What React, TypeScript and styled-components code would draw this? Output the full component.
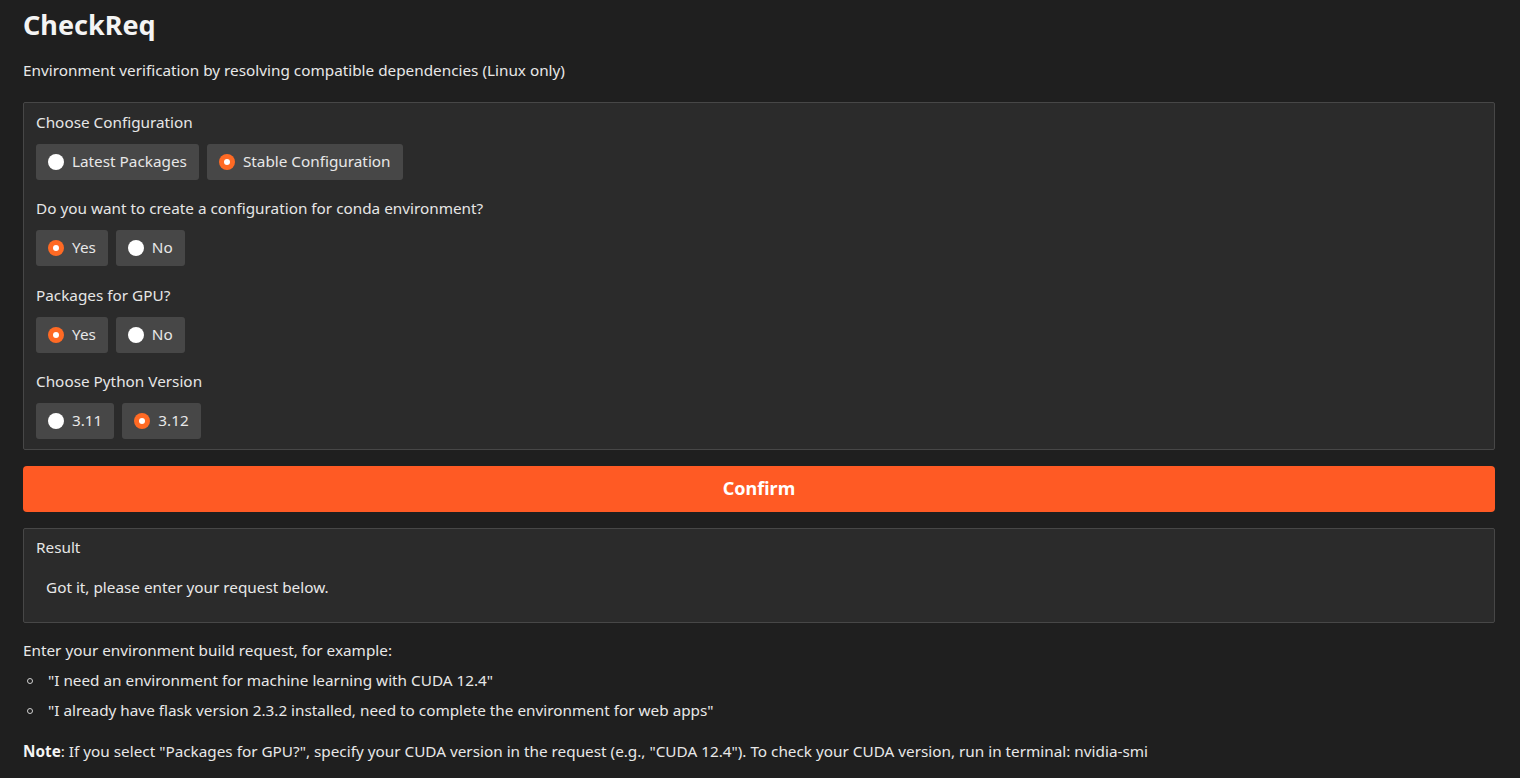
import React from "react";
import styled, { createGlobalStyle } from "styled-components";

const Global = createGlobalStyle`
  html, body { margin: 0; padding: 0; background: #1f1f1f; }
  body { font-family: "Noto Sans", "Open Sans", sans-serif; color: #e8e8e8; }
  * { box-sizing: border-box; }
`;

const Page = styled.div`
  padding: 0 25px 0 23px;
  display: flex;
  flex-direction: column;
`;

const Title = styled.h1`
  margin: 7px 0 0;
  font-size: 27px;
  line-height: 36px;
  font-weight: 700;
  color: #f4f4f4;
`;

const Description = styled.p`
  margin: 17px 0 0;
  font-size: 15.3px;
  line-height: 21px;
`;

const Panel = styled.div`
  margin-top: 21px;
  background: #2b2b2b;
  border: 1px solid #474747;
  border-radius: 2px;
  padding: 9px 12px 10px;
  display: flex;
  flex-direction: column;
  gap: 18.33px;
`;

const Group = styled.div`
  display: flex;
  flex-direction: column;
  gap: 12px;
`;

const Label = styled.div`
  font-size: 15.3px;
  line-height: 20px;
  padding-bottom: 1px;
  margin-bottom: -1px;
  color: #e6e6e6;
`;

const Options = styled.div`
  display: flex;
  gap: 8px;
`;

const Option = styled.div`
  height: 36px;
  display: flex;
  align-items: center;
  gap: 8px;
  padding: 0 12px 2px;
  background: #474747;
  border-radius: 3px;
  font-size: 15.3px;
  color: #e8e8e8;
`;

const Dot = styled.span<{ $on: boolean }>`
  width: 16px;
  height: 16px;
  margin-top: 2px;
  border-radius: 50%;
  background: ${(p) => (p.$on ? "#ff6a24" : "#ffffff")};
  display: flex;
  align-items: center;
  justify-content: center;
  &::after {
    content: "";
    width: 6px;
    height: 6px;
    border-radius: 50%;
    background: #ffffff;
    display: ${(p) => (p.$on ? "block" : "none")};
  }
`;

const ConfirmButton = styled.button`
  margin-top: 16px;
  height: 46px;
  width: 100%;
  border: none;
  border-radius: 4px;
  background: #ff5a24;
  color: #ffffff;
  font-family: inherit;
  font-size: 18px;
  font-weight: 700;
  padding-bottom: 2px;
`;

const ResultBox = styled.div`
  margin-top: 16px;
  height: 95px;
  background: #2b2b2b;
  border: 1px solid #474747;
  border-radius: 2px;
  padding: 8px 12px;
  display: flex;
  flex-direction: column;
`;

const ResultText = styled.div`
  margin-top: 20px;
  padding-left: 10px;
  font-size: 15.3px;
  line-height: 20px;
`;

const Intro = styled.p`
  margin: 17px 0 0;
  font-size: 15.3px;
  line-height: 20px;
`;

const List = styled.ul`
  margin: 10px 0 0;
  padding: 0;
  list-style: none;
  display: flex;
  flex-direction: column;
  gap: 10px;
`;

const Item = styled.li`
  display: flex;
  align-items: center;
  font-size: 15.3px;
  line-height: 20px;
  &::before {
    content: "";
    width: 4px;
    height: 4px;
    border: 1px solid #cfcfcf;
    border-radius: 50%;
    margin: 2px 15px 0 4px;
  }
`;

const Note = styled.p`
  margin: 21px 0 0;
  font-size: 15.3px;
  line-height: 20px;
  b { font-weight: 700; color: #f4f4f4; }
`;

type Q = { label: string; options: string[]; selected: number };

const questions: Q[] = [
  { label: "Choose Configuration", options: ["Latest Packages", "Stable Configuration"], selected: 1 },
  { label: "Do you want to create a configuration for conda environment?", options: ["Yes", "No"], selected: 0 },
  { label: "Packages for GPU?", options: ["Yes", "No"], selected: 0 },
  { label: "Choose Python Version", options: ["3.11", "3.12"], selected: 1 },
];

export default function App() {
  return (
    <>
      <Global />
      <Page>
        <Title>CheckReq</Title>
        <Description>Environment verification by resolving compatible dependencies (Linux only)</Description>
        <Panel>
          {questions.map((q) => (
            <Group key={q.label}>
              <Label>{q.label}</Label>
              <Options>
                {q.options.map((o, i) => (
                  <Option key={o}>
                    <Dot $on={i === q.selected} />
                    {o}
                  </Option>
                ))}
              </Options>
            </Group>
          ))}
        </Panel>
        <ConfirmButton>Confirm</ConfirmButton>
        <ResultBox>
          <Label>Result</Label>
          <ResultText>Got it, please enter your request below.</ResultText>
        </ResultBox>
        <Intro>Enter your environment build request, for example:</Intro>
        <List>
          <Item>"I need an environment for machine learning with CUDA 12.4"</Item>
          <Item>"I already have flask version 2.3.2 installed, need to complete the environment for web apps"</Item>
        </List>
        <Note>
          <b>Note</b>: If you select "Packages for GPU?", specify your CUDA version in the request (e.g., "CUDA 12.4"). To check your CUDA version, run in terminal: nvidia-smi
        </Note>
      </Page>
    </>
  );
}
